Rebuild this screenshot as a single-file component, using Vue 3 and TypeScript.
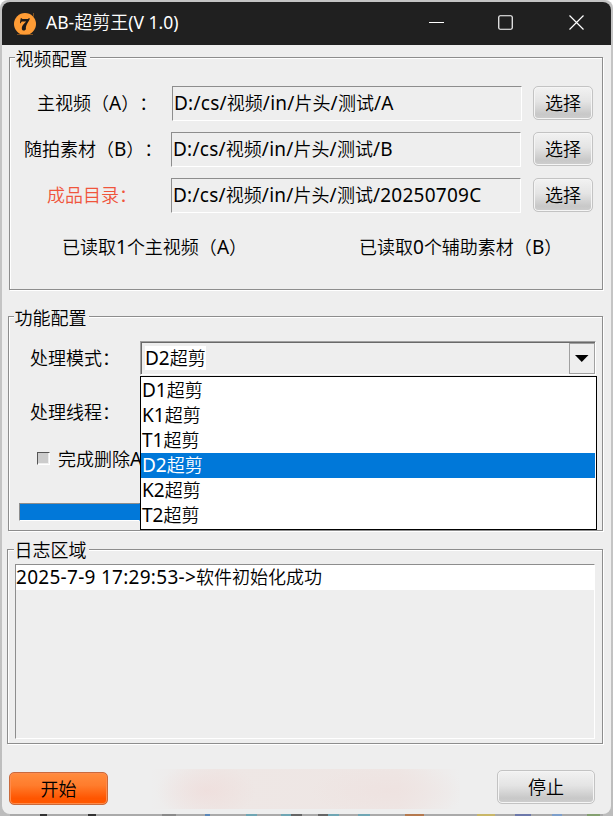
<script setup lang="ts">
import { h, ref } from 'vue'

// Splits mixed text so Latin and Chinese runs can be sized separately.
const MixedText = (props: { value: string }) =>
  h(
    'span',
    { class: 'mixed' },
    (props.value.match(/[\x20-\x7e]+|[^\x20-\x7e]+/g) ?? []).map((run) =>
      h('span', { class: /^[\x20-\x7e]/.test(run) ? 'latin' : 'han' }, run),
    ),
  )
MixedText.props = ['value']

interface PathRow {
  key: string
  label: string
  path: string
}

const paths: PathRow[] = [
  { key: 'main', label: '主视频（A）：', path: 'D:/cs/视频/in/片头/测试/A' },
  { key: 'extra', label: '随拍素材（B）：', path: 'D:/cs/视频/in/片头/测试/B' },
  { key: 'output', label: '成品目录：', path: 'D:/cs/视频/in/片头/测试/20250709C' },
]
const modes: string[] = ['D1超剪', 'K1超剪', 'T1超剪', 'D2超剪', 'K2超剪', 'T2超剪']
const selected = ref<string>('D2超剪')
const logs = ref<string[]>(['2025-7-9 17:29:53->软件初始化成功'])
</script>

<template>
  <div class="desktop">
    <main class="window">
      <header class="titlebar">
        <svg class="logo" width="24" height="24" viewBox="0 0 24 24">
          <circle cx="12" cy="12" r="11" fill="#ff9c35" />
          <path d="M20.5 1v3.500M4 22.500h16" stroke="#a96520" stroke-width=".7" fill="none" />
          <path d="M7.700 6.200h1l.7.8h5.300l1.200-.8h.9c-.2 3.200-4.300 5.700-3.900 10.800.1 1.700-3.700 2.200-4 .2-.5-3.200 2.400-5.600 4.300-7.600H9.500c-1 0-1.400.5-1.800 1.600h-.8z" fill="#1d1a18" />
        </svg>
        <h1 class="title"><MixedText value="AB-超剪王(V 1.0)" /></h1>
        <div class="controls">
          <svg width="16" height="16" viewBox="0 0 16 16"><path d="M0 7.500h15" /></svg>
          <svg width="16" height="16" viewBox="0 0 16 16"><rect x=".75" y=".75" width="13.500" height="13.500" rx="1.500" /></svg>
          <svg width="16" height="16" viewBox="0 0 16 16"><path d="M.5.5l14 14M14.500.5l-14 14" /></svg>
        </div>
      </header>

      <section class="group video">
        <h2 class="legend">视频配置</h2>
        <div class="paths">
          <div v-for="row in paths" :key="row.key" class="path-row" :class="row.key">
            <label class="path-label"><MixedText :value="row.label" /></label>
            <div class="field"><MixedText :value="row.path" /></div>
            <button class="btn choose">选择</button>
          </div>
        </div>
        <div class="status">
          <MixedText value="已读取1个主视频（A）" />
          <MixedText value="已读取0个辅助素材（B）" />
        </div>
      </section>

      <section class="group feature">
        <h2 class="legend">功能配置</h2>
        <div class="feature-body">
          <div class="options">
            <span class="opt-label">处理模式：</span>
            <span class="opt-label">处理线程：</span>
            <label class="check"><i class="box"></i><MixedText value="完成删除A" /></label>
            <div class="progress"></div>
          </div>
          <div class="combo">
            <div class="combo-box">
              <span class="combo-value"><MixedText :value="selected" /></span>
              <span class="arrow">
                <svg width="14" height="7" viewBox="0 0 14 7"><path d="M0 0h13.500L6.750 7z" /></svg>
              </span>
            </div>
            <ul class="menu">
              <li v-for="m in modes" :key="m" :class="{ active: m === selected }" @click="selected = m">
                <MixedText :value="m" />
              </li>
            </ul>
          </div>
        </div>
      </section>

      <section class="group log">
        <h2 class="legend">日志区域</h2>
        <div class="log-list">
          <div v-for="line in logs" :key="line" class="log-line"><MixedText :value="line" /></div>
        </div>
      </section>

      <footer class="footer">
        <button class="btn start">开始</button>
        <div class="haze"></div>
        <button class="btn stop">停止</button>
      </footer>
    </main>
    <div class="strip"></div>
  </div>
</template>

<style>
body {
  margin: 0;
}
.mixed {
  white-space: pre;
}
.mixed .latin {
  font-size: var(--latin, 19px);
  font-weight: 400;
  letter-spacing: var(--track, 0);
}
</style>

<style scoped>
* {
  box-sizing: border-box;
}
.desktop {
  width: 613px;
  height: 816px;
  padding: 2px 2px 0;
  overflow: hidden;
  background: linear-gradient(#c4c4c4 0 600px, #bcbcbc 816px);
  border-radius: 8px 8px 0 0;
  font-family: 'Noto Sans', 'Noto Sans CJK SC', sans-serif;
  font-size: 18px;
  font-weight: 350;
  line-height: 24px;
  text-spacing-trim: space-all;
  color: #000;
}
.window {
  width: 609px;
  height: 812px;
  border-radius: 8px;
  overflow: hidden;
  background: #eee;
}
.titlebar {
  display: flex;
  align-items: center;
  height: 43px;
  padding: 0 26px 0 11px;
  background: #202020;
  color: #fff;
}
.title {
  --latin: 17.5px;
  margin: -3px 0 0 9px;
  font-size: 18px;
  font-weight: inherit;
}
.controls {
  display: flex;
  gap: 54px;
  margin: -1px 0 0 auto;
}
.controls svg {
  fill: none;
  stroke: #fff;
  stroke-width: 1.2;
}
.controls svg:first-child {
  stroke-width: 1;
}
.controls svg:nth-child(2) {
  margin: 0 1px 0 -1px;
}
.group {
  border: 1px solid #8d8d8d;
  box-shadow: 1px 1px #fff, inset 1px 1px #fff;
}
.legend {
  width: 75px;
  height: 22px;
  margin: -11px 0 0 5px;
  padding-left: 0.5px;
  background: #eee;
  font-size: 18px;
  line-height: 24px;
  font-weight: inherit;
  white-space: nowrap;
}
.video {
  width: 594px;
  height: 233px;
  margin: 12px 0 0 7px;
}
.paths {
  display: grid;
  gap: 11px;
  margin-top: 17px;
}
.path-row {
  display: flex;
  height: 35px;
}
.path-label {
  width: 161px;
  padding: 5px 0 0 14px;
  white-space: nowrap;
}
.main .path-label {
  width: 162px;
  padding-left: 27px;
}
.output .path-label {
  padding-left: 37px;
  color: #f0553c;
}
.field {
  --track: 0.25px;
  width: 350px;
  padding: 4px 0 0 1px;
  border: 1px solid;
  border-color: #8d8d8d #fff #fff #8d8d8d;
}
.btn {
  padding: 0;
  border: 1px solid #c3c3c3;
  border-radius: 5px;
  background: linear-gradient(#f2f2f2, #e4e4e4 45%, #c8c8c8 85%, #cecece);
  box-shadow: inset 0 0 0 1px #f5f5f5;
  color: #000;
  font: inherit;
}
.choose {
  width: 60px;
  height: 34px;
  margin-left: 12px;
}
.main .choose {
  margin-left: 11px;
}
.status {
  display: grid;
  grid-template-columns: 297px 1fr;
  margin: 22px 0 0 52px;
}
.feature {
  width: 595px;
  height: 215px;
  margin: 26px 0 0 6px;
}
.feature-body {
  display: flex;
  padding-top: 13px;
}
.options {
  display: flex;
  flex-direction: column;
  flex: none;
  width: 131px;
  white-space: nowrap;
}
.opt-label {
  height: 24px;
  margin: 5px 0 25px 21px;
}
.check {
  display: flex;
  align-items: center;
  height: 24px;
  margin: 0 0 0 28px;
}
.opt-label + .check {
  margin-top: -2px;
}
.box {
  flex: none;
  width: 13px;
  height: 13px;
  margin: -2px 8px 0 0;
  border: 1px solid;
  border-color: #555 #fff #fff #555;
  background: #ccc;
  box-shadow: inset -1px -1px #eee;
}
.progress {
  height: 18px;
  margin: 32px 0 0 10px;
  border: 1px solid;
  border-color: #8d8d8d transparent #fff #8d8d8d;
  background: #0178d9;
}
.combo {
  position: relative;
  flex: none;
}
.combo-box {
  display: flex;
  align-items: center;
  justify-content: space-between;
  width: 456px;
  height: 34px;
  border: 1px solid;
  border-color: #a0a0a0 #fff #fff #a0a0a0;
  box-shadow: inset 1px 1px #696969;
  padding: 1px 0 0 4px;
}
.combo-value {
  height: 24px;
  margin-top: -1px;
  background: #fff;
  line-height: 24px;
}
.arrow {
  display: flex;
  align-items: center;
  justify-content: center;
  width: 26px;
  height: 31px;
  border: 1px solid #a0a0a0;
}
.menu {
  width: 457px;
  height: 154px;
  margin: 1px 0 0;
  padding: 1px 1px 1px 0;
  border: 1px solid #000;
  background: #fff;
  list-style: none;
}
.menu li {
  height: 25px;
  padding-left: 1px;
  line-height: 24px;
}
.menu .active {
  background: #0078d9;
  color: #fff;
}
.log {
  width: 596px;
  height: 195px;
  margin: 18px 0 0 5px;
}
.log .legend {
  margin-left: 6px;
  line-height: 23px;
}
.log-list {
  --track: 0.28px;
  width: 580px;
  height: 175px;
  margin: 3px 0 0 7px;
  border: 1px solid;
  border-color: #8d8d8d #fff #fff #8d8d8d;
}
.log-line {
  height: 25px;
  background: #fff;
  line-height: 24px;
}
.footer {
  display: flex;
  margin: 25px 0 0 7px;
}
.start {
  width: 99px;
  height: 33px;
  margin-top: 3px;
  border-color: #c96a3c;
  background: linear-gradient(#ff8c3e, #ff7c2c 40%, #ff5500 82%, #ff5900);
  box-shadow: inset 0 0 0 1px #ff8b4b;
}
.haze {
  width: 310px;
  height: 40px;
  margin: 0 37px 0 42px;
  background:
    radial-gradient(ellipse 50px 28px at 56px 22px, #efdbd9aa, transparent),
    radial-gradient(ellipse 80px 26px at 240px 22px, #eedfdd88, transparent),
    linear-gradient(90deg, transparent, #eee7e5 22%, #eee6e4 80%, transparent);
}
.stop {
  width: 98px;
  height: 34px;
  margin-top: 1px;
}
.strip {
  height: 2px;
  margin: 0 8px;
  background: linear-gradient(
    90deg,
    #aaa 0 30px, #333 30px 37px, #aaa 37px 78px, #333 78px 86px, #aaa 86px 152px,
    #8a8a8a 152px 166px, #aaa 166px 195px, #5b87b8 195px 200px, #aaa 200px 236px,
    #6fa6b4 236px 247px, #aaa 247px 271px, #6fa6b4 271px 281px, #666 281px 292px,
    #aaa 292px 308px, #666 308px 318px, #6fa6b4 318px 329px, #aaa 329px 348px,
    #6fa6b4 348px 360px, #aaa 360px 395px, #b5794e 395px 414px, #aaa 414px 467px,
    #c9b768 467px 485px, #aaa 485px 505px, #6c78aa 505px 521px, #aaa 521px 542px,
    #7d9fcb 542px 552px, #aaa 552px 577px, #84a070 577px 590px, #aaa 590px
  );
}
</style>
